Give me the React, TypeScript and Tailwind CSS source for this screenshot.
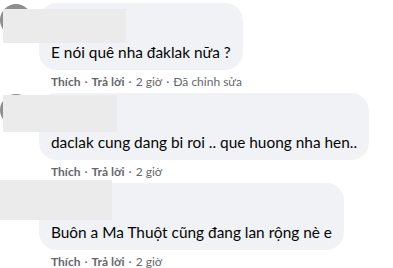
const comments = [
  { text: "E nói quê nha đaklak nữa ?", edited: true, blur: "left-[3px] top-[6px] w-[123px] h-[34px]" },
  { text: "daclak cung dang bi roi .. que huong nha hen..", edited: false, blur: "left-[3px] top-[2px] w-[114px] h-[37px]" },
  { text: "Buôn a Ma Thuột cũng đang lan rộng nè e", edited: false, blur: "left-0 top-[-3px] w-[112px] h-[40px]" },
];

function Comment({ text, edited, blur }: { text: string; edited: boolean; blur: string }) {
  return (
    <div className="relative flex">
      <div className="w-[39px] shrink-0 pt-[1px]">
        <div className="h-8 w-8 rounded-full bg-[#8e8e8e]" />
      </div>
      <div className="flex flex-col">
        <div className="w-fit rounded-[18px] bg-[#f0f2f5] px-3 pt-[39px] pb-2">
          <div className="text-[15.4px] leading-5 text-[#050505]">{text}</div>
        </div>
        <div className="mt-[4px] mb-[2px] flex items-center pl-3 text-[12px] leading-4 text-[#65676b]">
          <span className="font-bold">Thích</span>
          <span className="px-1">·</span>
          <span className="font-bold">Trả lời</span>
          <span className="px-1">·</span>
          <span>2 giờ</span>
          {edited && (
            <>
              <span className="px-1">·</span>
              <span>Đã chỉnh sửa</span>
            </>
          )}
        </div>
      </div>
      <div className={`absolute bg-[#ebebeb] ${blur}`} />
    </div>
  );
}

export default function App() {
  return (
    <div className="h-[268px] w-[393px] overflow-hidden bg-white pt-[3px] font-['Lato',sans-serif]">
      <div className="flex flex-col gap-[1px]">
        {comments.map((c, i) => (
          <Comment key={i} {...c} />
        ))}
      </div>
    </div>
  );
}
